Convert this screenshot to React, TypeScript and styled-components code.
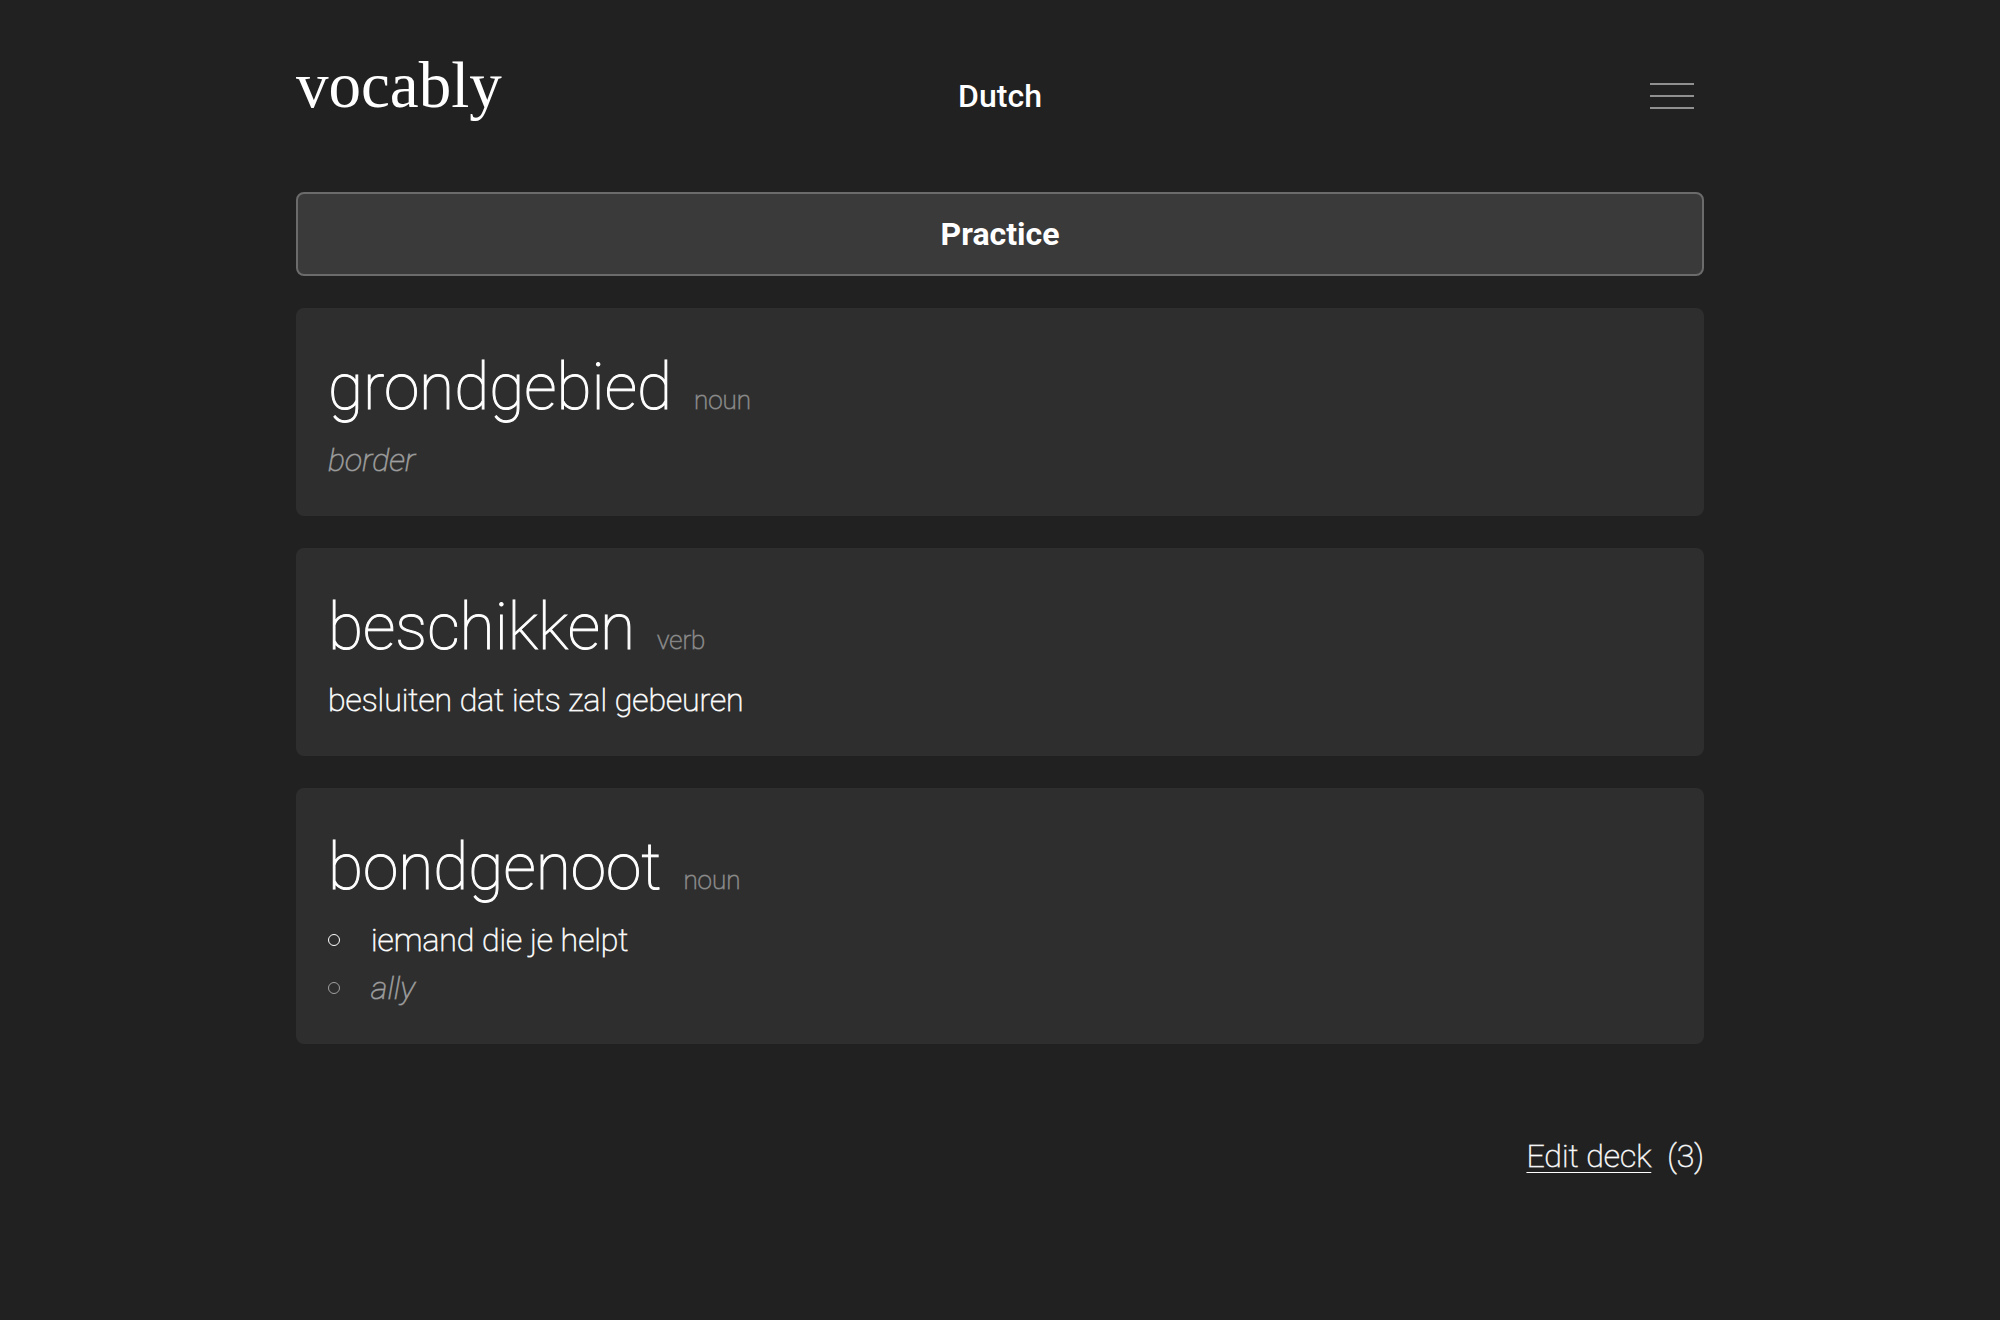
import React from 'react';
import styled, { createGlobalStyle } from 'styled-components';

const GlobalStyle = createGlobalStyle`
  *, *::before, *::after {
    box-sizing: border-box;
  }

  body {
    margin: 0;
    min-height: 100vh;
    background: #212121;
    color: #ffffff;
    font-family: Roboto, "Liberation Sans", sans-serif;
    font-size: 32px;
    font-weight: 100;
    line-height: 48px;
    -webkit-font-smoothing: antialiased;
  }
`;

const Page = styled.div`
  max-width: 1472px;
  margin: 0 auto;
  padding: 0 32px 96px;
`;

const Header = styled.header`
  display: grid;
  grid-template-columns: 1fr auto 1fr;
  align-items: baseline;
  min-height: 192px;
  padding: 48px 0;
`;

const Logo = styled.a`
  justify-self: start;
  color: inherit;
  font-family: "Liberation Serif", serif;
  font-size: 65px;
  font-weight: 400;
  line-height: 74px;
  text-decoration: none;
`;

const Language = styled.h1`
  margin: 0;
  font-size: 32px;
  font-weight: 500;
`;

const MenuButton = styled.button`
  justify-self: end;
  align-self: center;
  display: flex;
  flex-direction: column;
  gap: 10px;
  padding: 10px;
  border: 0;
  background: none;
  cursor: pointer;
`;

const MenuLine = styled.span`
  width: 44px;
  height: 2px;
  background: #909090;
`;

const Main = styled.main`
  display: flex;
  flex-direction: column;
  gap: 32px;
`;

const PracticeButton = styled.button`
  width: 100%;
  padding: 16px 32px;
  border: 2px solid #6b6b6b;
  border-radius: 8px;
  background: #3a3a3a;
  color: inherit;
  font: inherit;
  font-weight: 700;
  cursor: pointer;
`;

const Card = styled.article`
  padding: 32px;
  border-radius: 8px;
  background: #2e2e2e;
`;

const CardHeader = styled.div`
  display: flex;
  align-items: baseline;
  gap: 22px;
`;

const Word = styled.h2`
  margin: 0;
  font-size: 64px;
  font-weight: 100;
  line-height: 96px;
  -webkit-text-stroke: 1px currentColor;
`;

const PartOfSpeech = styled.span`
  color: #909090;
  font-size: 26px;
  -webkit-text-stroke: 1px rgba(144, 144, 144, 0.7);
`;

const Meaning = styled.p<{ $translation?: boolean }>`
  margin: 0;
  color: ${({ $translation }) => ($translation ? '#a0a0a0' : 'inherit')};
  font-style: ${({ $translation }) => ($translation ? 'italic' : 'normal')};
  -webkit-text-stroke: 1px
    ${({ $translation }) => ($translation ? 'rgba(160, 160, 160, 0.7)' : 'rgba(255, 255, 255, 0.8)')};
`;

const MeaningList = styled.ul`
  margin: 0;
  padding: 0;
  list-style: none;
`;

const MeaningItem = styled(Meaning).attrs({ as: 'li' })`
  display: flex;
  align-items: center;
  gap: 31px;

  &::before {
    content: '';
    width: 12px;
    height: 12px;
    border: 1px solid currentColor;
    border-radius: 50%;
  }
`;

const Footer = styled.footer`
  display: flex;
  justify-content: flex-end;
  gap: 16px;
  padding-top: 88px;
  -webkit-text-stroke: 1px rgba(255, 255, 255, 0.7);
`;

const EditLink = styled.a`
  color: inherit;
  text-decoration: underline 1px #ffffff;
  text-underline-offset: 5px;
`;

type Sense = { text: string; translation?: boolean };
type Entry = { word: string; partOfSpeech: string; senses: Sense[] };

const entries: Entry[] = [
  {
    word: 'grondgebied',
    partOfSpeech: 'noun',
    senses: [{ text: 'border', translation: true }],
  },
  {
    word: 'beschikken',
    partOfSpeech: 'verb',
    senses: [{ text: 'besluiten dat iets zal gebeuren' }],
  },
  {
    word: 'bondgenoot',
    partOfSpeech: 'noun',
    senses: [{ text: 'iemand die je helpt' }, { text: 'ally', translation: true }],
  },
];

function WordCard({ word, partOfSpeech, senses }: Entry) {
  return (
    <Card>
      <CardHeader>
        <Word>{word}</Word>
        <PartOfSpeech>{partOfSpeech}</PartOfSpeech>
      </CardHeader>
      {senses.length === 1 ? (
        <Meaning $translation={senses[0].translation}>{senses[0].text}</Meaning>
      ) : (
        <MeaningList>
          {senses.map((sense) => (
            <MeaningItem key={sense.text} $translation={sense.translation}>
              {sense.text}
            </MeaningItem>
          ))}
        </MeaningList>
      )}
    </Card>
  );
}

export default function App() {
  return (
    <>
      <GlobalStyle />
      <Page>
        <Header>
          <Logo href="#">vocably</Logo>
          <Language>Dutch</Language>
          <MenuButton type="button" aria-label="Menu">
            <MenuLine />
            <MenuLine />
            <MenuLine />
          </MenuButton>
        </Header>
        <Main>
          <PracticeButton type="button">Practice</PracticeButton>
          {entries.map((entry) => (
            <WordCard key={entry.word} {...entry} />
          ))}
        </Main>
        <Footer>
          <EditLink href="#edit">Edit deck</EditLink>
          <span>({entries.length})</span>
        </Footer>
      </Page>
    </>
  );
}
